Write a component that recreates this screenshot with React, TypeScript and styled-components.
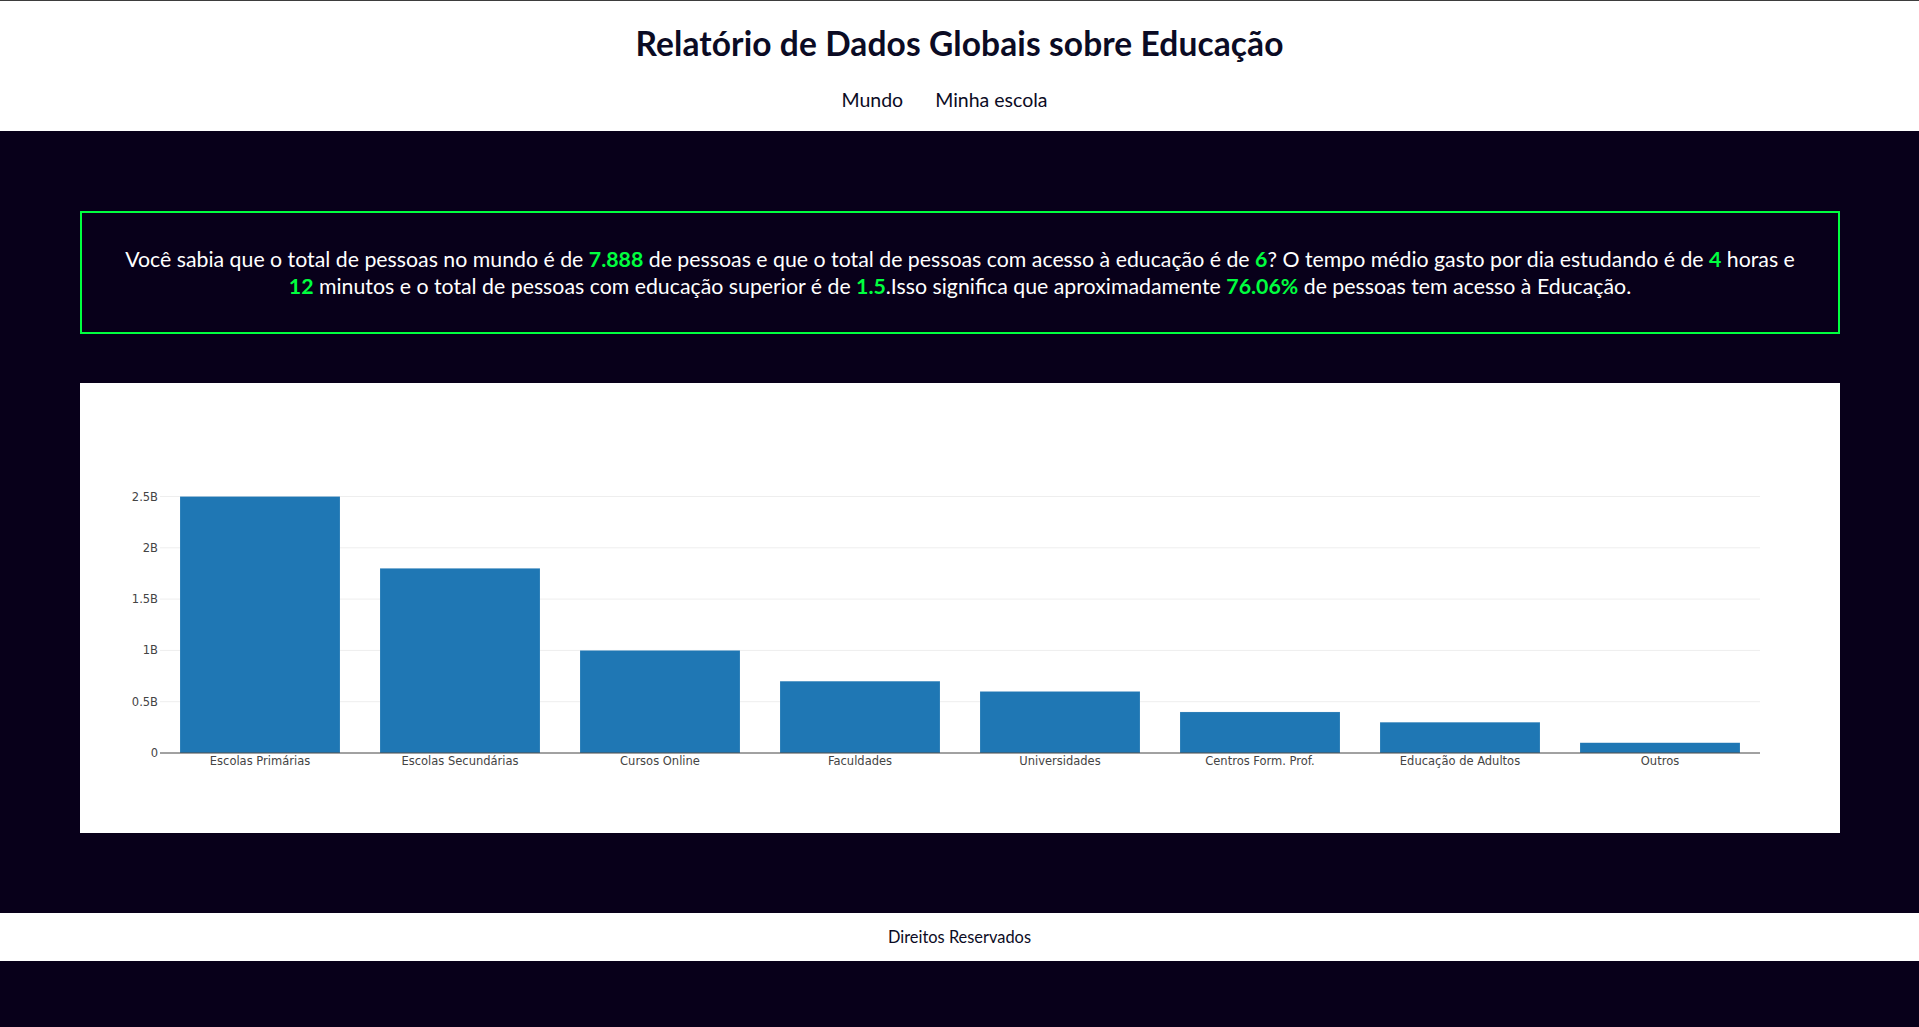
import React from "react";
import styled, { createGlobalStyle } from "styled-components";

const GlobalStyle = createGlobalStyle`
  html, body {
    margin: 0;
    padding: 0;
    background: #08001a;
  }
  body {
    font-family: "Lato", "Noto Sans", sans-serif;
  }
`;

const Header = styled.header`
  background: #ffffff;
  border-top: 1px solid #3d3d3d;
  height: 130px;
  display: flex;
  flex-direction: column;
  align-items: center;
  color: #0b0b24;
`;

const Title = styled.h1`
  margin: 22px 0 0;
  font-size: 33.5px;
  font-weight: 700;
  line-height: 40px;
  letter-spacing: 0.1px;
`;

const Nav = styled.nav`
  display: flex;
  gap: 32px;
  margin-top: 25px;
  padding-right: 30px;
`;

const NavLink = styled.a`
  font-size: 19.5px;
  line-height: 24px;
  color: #0b0b24;
  text-decoration: none;
  cursor: pointer;
`;

const Main = styled.main`
  background: #08001a;
  padding: 80px 79px 80px 80px;
  display: flex;
  flex-direction: column;
  gap: 49px;
`;

const FactBox = styled.section`
  border: 2px solid #00ff3f;
  padding: 33px 38px 0;
  height: 123px;
  box-sizing: border-box;
  text-align: center;
  color: #ffffff;
  font-size: 21.3px;
  line-height: 27px;
`;

const Highlight = styled.strong`
  color: #00ff3f;
  font-weight: 700;
`;

const ChartCard = styled.section`
  background: #ffffff;
  height: 450px;
`;

const ChartSvg = styled.svg`
  display: block;
  width: 100%;
  height: 450px;
`;

const Footer = styled.footer`
  background: #ffffff;
  height: 48px;
  display: flex;
  align-items: center;
  justify-content: center;
  color: #0b0b24;
  font-size: 16.4px;
  padding-bottom: 1px;
  box-sizing: border-box;
`;

const data = [
  { label: "Escolas Primárias", value: 2.5 },
  { label: "Escolas Secundárias", value: 1.8 },
  { label: "Cursos Online", value: 1.0 },
  { label: "Faculdades", value: 0.7 },
  { label: "Universidades", value: 0.6 },
  { label: "Centros Form. Prof.", value: 0.4 },
  { label: "Educação de Adultos", value: 0.3 },
  { label: "Outros", value: 0.1 },
];

const ticks = [
  { v: 0, t: "0" },
  { v: 0.5, t: "0.5B" },
  { v: 1, t: "1B" },
  { v: 1.5, t: "1.5B" },
  { v: 2, t: "2B" },
  { v: 2.5, t: "2.5B" },
];

const W = 1760;
const PL = 80;
const PR = 80;
const PT = 100;
const PH = 270;
const YMAX = 2.6316;
const plotW = W - PL - PR;
const band = plotW / data.length;
const yOf = (v: number) => PT + PH - (v / YMAX) * PH;
const tickFont = "'DejaVu Sans', Verdana, sans-serif";

const BarChart: React.FC = () => (
  <ChartSvg viewBox={`0 0 ${W} 450`} preserveAspectRatio="none">
    {ticks
      .filter((t) => t.v > 0)
      .map((t) => (
        <line
          key={t.t}
          x1={PL}
          x2={W - PR}
          y1={yOf(t.v)}
          y2={yOf(t.v)}
          stroke="#eeeeee"
          strokeWidth={1}
        />
      ))}
    {data.map((d, i) => {
      const x = PL + band * i + band * 0.1;
      const y = yOf(d.value);
      return (
        <rect
          key={d.label}
          x={x}
          y={y}
          width={band * 0.8}
          height={PT + PH - y}
          fill="#1f77b4"
          stroke="#ffffff"
          strokeOpacity={0.3}
          strokeWidth={0.5}
        />
      );
    })}
    <line x1={PL} x2={W - PR} y1={PT + PH} y2={PT + PH} stroke="#444" strokeWidth={1} />
    {ticks.map((t) => (
      <text
        key={t.t}
        x={PL - 2}
        y={yOf(t.v) + 4}
        textAnchor="end"
        fontFamily={tickFont}
        fontSize={11.5}
        fill="#444"
      >
        {t.t}
      </text>
    ))}
    {data.map((d, i) => (
      <text
        key={d.label}
        x={PL + band * i + band / 2}
        y={PT + PH + 12}
        textAnchor="middle"
        fontFamily={tickFont}
        fontSize={11.5}
        fill="#444"
      >
        {d.label}
      </text>
    ))}
  </ChartSvg>
);

export default function App() {
  return (
    <>
      <GlobalStyle />
      <Header>
        <Title>Relatório de Dados Globais sobre Educação</Title>
        <Nav>
          <NavLink>Mundo</NavLink>
          <NavLink>Minha escola</NavLink>
        </Nav>
      </Header>
      <Main>
        <FactBox>
          Você sabia que o total de pessoas no mundo é de <Highlight>7.888</Highlight> de pessoas e
          que o total de pessoas com acesso à educação é de <Highlight>6</Highlight>? O tempo médio
          gasto por dia estudando é de <Highlight>4</Highlight> horas e <Highlight>12</Highlight>{" "}
          minutos e o total de pessoas com educação superior é de <Highlight>1.5</Highlight>.Isso
          significa que aproximadamente <Highlight>76.06%</Highlight> de pessoas tem acesso à
          Educação.
        </FactBox>
        <ChartCard>
          <BarChart />
        </ChartCard>
      </Main>
      <Footer>Direitos Reservados</Footer>
    </>
  );
}
